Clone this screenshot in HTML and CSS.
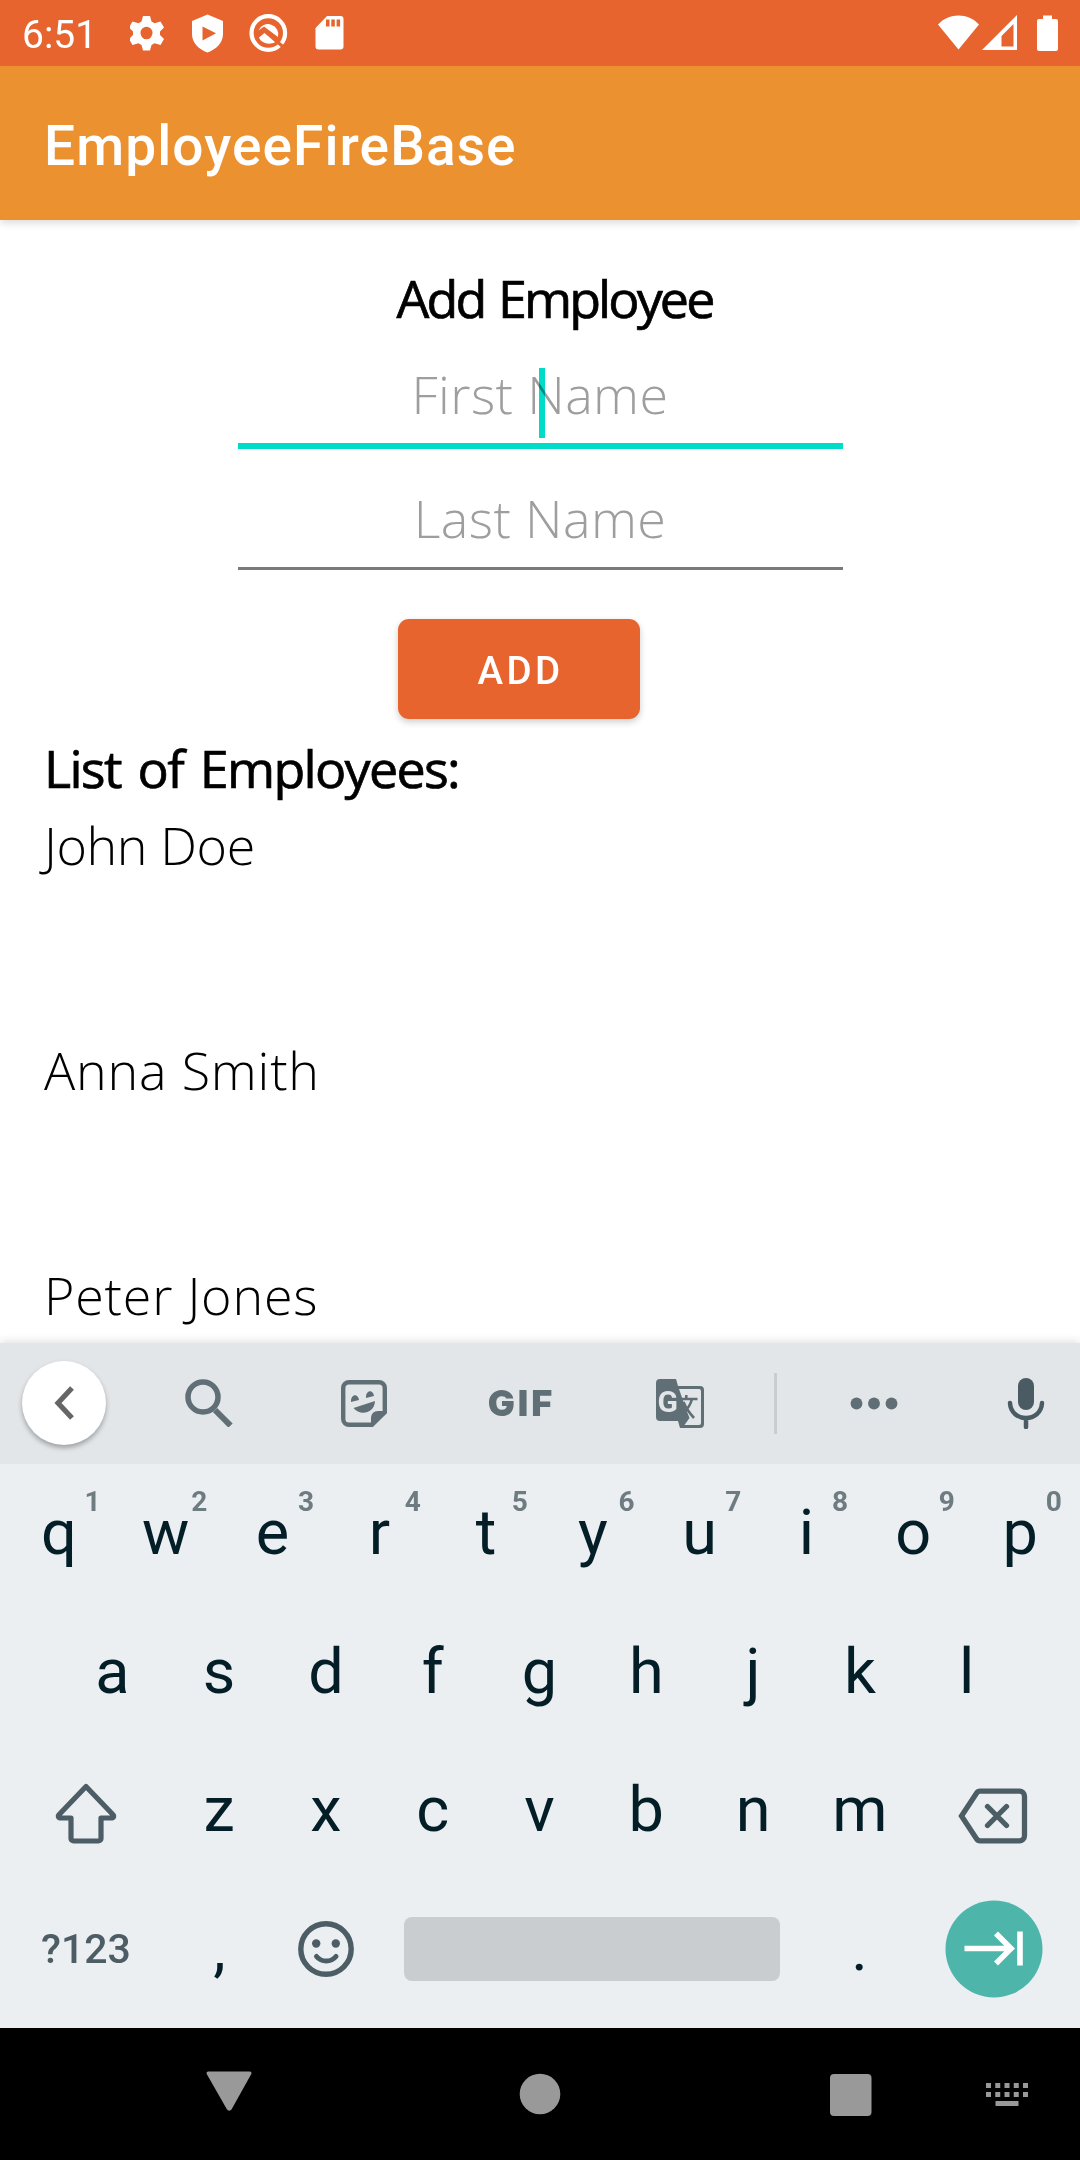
FILE: index.html
```html
<!DOCTYPE html>
<html lang="en">
<head>
<meta charset="utf-8">
<title>EmployeeFireBase</title>
<link rel="stylesheet" href="styles.css">
</head>
<body>
<div class="screen">
  <div class="status-bar">
    <span class="clock">6:51</span>
    <svg class="notifications" width="216" height="40" viewBox="0 0 216 40" fill="#fff">
      <g fill-rule="evenodd"><path d="M13 3h7l1.500 5.500 3 1.700 6-1.700 3.500 6-4 4v3.500l4 4-3.500 6-6-1.700-3 1.700-1.500 5.500h-7l-1.500-5.500-3-1.700-6 1.700-3.500-6 4-4v-3.500l-4-4 3.500-6 6 1.700 3-1.700zM16.500 13.700a6 6.300 0 1 0 0 12.600 6 6.300 0 1 0 0-12.600z"/>
      <path d="M77.500 1.500 93 8v13c0 9-7 15.500-15.500 18.500C69 36.500 62 30 62 21V8zM72.500 13.500v14L86 20.200z"/></g>
      <circle cx="138.300" cy="20" r="16.800" fill="none" stroke="#fff" stroke-width="4.200"/>
      <path d="M128.500 17.500a10.300 10.300 0 0 1 19.500 6.500L134 13.500zM129 24.500l6-5 10.500 9.500c-6 3.500-14 1.500-16.500-4.500z"/>
      <path d="M127.500 22l6-5 21 18" stroke="#e7642f" stroke-width="3.200" fill="none"/>
      <path d="M197 3h13.500a3 3 0 0 1 3 3v27.500a3 3 0 0 1-3 3h-22a3 3 0 0 1-3-3V15z"/>
      <path d="M196 6.500h3.500v7H196zM201.300 6.500h3.500v7h-3.500zM206.600 6.500h3.500v7h-3.500z" fill="#e7642f"/>
    </svg>
    <svg class="signals" width="122" height="40" viewBox="0 0 122 40" fill="#fff">
      <path d="M0 11.500C11-.5 30-.5 41 11.500L20.500 36.500z"/>
      <path d="M79 2v35H44zM75.500 11 63.500 23v10.500h12z" fill-rule="evenodd"/>
      <path d="M105 2.500h9V6h4a2 2 0 0 1 2 2v28a2 2 0 0 1-2 2h-17a2 2 0 0 1-2-2V8a2 2 0 0 1 2-2h4z"/>
    </svg>
  </div>
  <header class="app-bar">EmployeeFireBase</header>

  <main class="content">
    <h1 class="form-title">Add Employee</h1>
    <div class="field field-active"><span class="hint">First Name</span><i class="caret"></i></div>
    <div class="field"><span class="hint">Last Name</span></div>
    <button class="add-button">ADD</button>
    <h2 class="list-title">List of Employees:</h2>
    <ul class="employees">
      <li class="john">John Doe</li>
      <li>Anna Smith</li>
      <li>Peter Jones</li>
    </ul>
  </main>

  <section class="keyboard">
    <div class="toolbar">
      <span class="collapse"><svg width="84" height="84" viewBox="0 0 84 84" fill="none" stroke="#666" stroke-width="5.200"><path d="M50 27 36 42l14 15"/></svg></span>
      <svg width="48" height="48" viewBox="0 0 48 48" fill="none" stroke="#606f76"><circle cx="18" cy="18" r="15" stroke-width="5.500"/><path d="M30 31l15.500 15.500" stroke-width="6"/></svg>
      <svg width="46" height="47" viewBox="0 0 46 47"><path d="M8 2.200h30a5.800 5.800 0 0 1 5.800 5.800v24L31 44.800H8A5.800 5.800 0 0 1 2.200 39V8A5.800 5.800 0 0 1 8 2.200z" fill="none" stroke="#606f76" stroke-width="4.400"/><path d="M46 31h-8.500c-5 0-7.500 3-7.500 7.500V46h2L46 33zM10 22c-.5-8 7-9 8-2zM25 18c-.5-8 7-9 8-2zM12.500 28l21.500-7c-.5 13-15.500 15-21.500 7z" fill="#606f76"/></svg>
      <span class="gif">GIF</span>
      <svg width="48" height="49" viewBox="0 0 48 49"><path d="M4 0h16l2 7h22a4 4 0 0 1 4 4v34a4 4 0 0 1-4 4H24l-2-7H4a4 4 0 0 1-4-4V4a4 4 0 0 1 4-4z" fill="#606f76"/><path d="M23 10h20a2 2 0 0 1 2 2v32a2 2 0 0 1-2 2H28.500l5-7-3.500-9z" fill="#e2e6e9"/><text x="1.500" y="33" class="glyph-g">G</text><g fill="none" stroke="#606f76" stroke-width="2.600"><path d="M25 20h16.500M30.300 16v4M36 20c-1.500 6-4 10-9.500 15M27.500 23c2 5 5 10 10.500 16"/></g></svg>
      <i class="divider"></i>
      <svg width="48" height="14" viewBox="0 0 48 14" fill="#606f76"><circle cx="6.500" cy="7.500" r="5.900"/><circle cx="24" cy="7.500" r="5.900"/><circle cx="41.500" cy="7.500" r="5.900"/></svg>
      <svg class="mic" width="38" height="52" viewBox="0 0 38 52"><rect x="11" y="1" width="16" height="32" rx="8" fill="#4a5b63"/><path d="M3 26c1 20 31 20 32 0M19 41v9" fill="none" stroke="#4a5b63" stroke-width="4.500" stroke-linecap="round"/></svg>
    </div>
    <div class="keys">
      <div class="row">
        <span class="key">q<sup>1</sup></span><span class="key">w<sup>2</sup></span><span class="key">e<sup>3</sup></span><span class="key">r<sup>4</sup></span><span class="key">t<sup>5</sup></span><span class="key">y<sup>6</sup></span><span class="key">u<sup>7</sup></span><span class="key">i<sup>8</sup></span><span class="key">o<sup>9</sup></span><span class="key">p<sup>0</sup></span>
      </div>
      <div class="row">
        <span class="key">a</span><span class="key">s</span><span class="key">d</span><span class="key">f</span><span class="key">g</span><span class="key">h</span><span class="key">j</span><span class="key">k</span><span class="key">l</span>
      </div>
      <div class="row">
        <span class="key wide shift"><svg width="62" height="62" viewBox="0 0 62 62" fill="none" stroke="#4c5d65" stroke-width="5.200" stroke-linejoin="round"><path d="M31 4.500 58.300 33a1.800 1.800 0 0 1-1 3H46v20.500a2.500 2.500 0 0 1-2.500 2.500h-25a2.500 2.500 0 0 1-2.500-2.500V36H4.700a1.800 1.800 0 0 1-1-3z"/></svg></span><span class="key">z</span><span class="key">x</span><span class="key">c</span><span class="key">v</span><span class="key">b</span><span class="key">n</span><span class="key">m</span><span class="key wide back"><svg width="70" height="56" viewBox="0 0 70 56" fill="none" stroke="#4c5d65" stroke-width="5.300"><path d="M22 3.200h39.500a5 5 0 0 1 5 5v39.600a5 5 0 0 1-5 5H22c-1.500 0-2.500-.5-3.500-2L3.500 28 18.500 5.200c1-1.500 2-2 3.500-2z"/><path d="M29.500 18.500l19 19M48.500 18.500l-19 19" stroke-linecap="round"/></svg></span>
      </div>
      <div class="row">
        <span class="key wide symbols">?123</span><span class="key">,</span><span class="key"><svg width="58" height="58" viewBox="0 0 58 58" fill="none" stroke="#4c5d65"><circle cx="29" cy="29" r="25.200" stroke-width="5.400"/><path d="M19.500 36.500c5 6 14.500 6 19.500 0" stroke-width="5" stroke-linecap="round"/><g fill="#4c5d65" stroke="none"><circle cx="19.200" cy="23.500" r="4.200"/><circle cx="38.800" cy="23.500" r="4.200"/></g></svg></span><span class="space"></span><span class="key">.</span><span class="key wide enter"><svg width="98" height="98" viewBox="0 0 98 98"><circle cx="49" cy="49" r="48.500" fill="#4eb5ab"/><path d="M19.500 48.500h47M51 33.500l15 15-15 15M75 31.500v34" fill="none" stroke="#fff" stroke-width="5.600"/></svg></span>
      </div>
    </div>
  </section>

  <nav class="nav-bar">
    <svg class="nav-back" width="46" height="40" viewBox="0 0 46 40" fill="#999"><path d="M2.500.5h41c2 0 2.500 1.500 1.500 3L25.500 38.500c-1 1.500-3.500 1.500-4.500 0L1 3.500C0 2 .5.500 2.500.5z"/></svg>
    <svg class="nav-home" width="42" height="42" viewBox="0 0 42 42" fill="#999"><circle cx="21" cy="21" r="20.300"/></svg>
    <svg class="nav-recent" width="42" height="42" viewBox="0 0 42 42" fill="#999"><rect width="41.500" height="42" rx="4"/></svg>
    <svg class="nav-ime" width="42" height="24" viewBox="0 0 42 24" fill="none" stroke="#999" stroke-width="5"><path d="M0 2.500h42M0 11.500h42" stroke-dasharray="5 4.250"/><path d="M9.500 20.500h23"/></svg>
  </nav>
</div>
</body>
</html>
```

FILE: styles.css
```css
* { box-sizing: border-box; margin: 0; padding: 0; }

body { font-family: Roboto, "Liberation Sans", sans-serif; background: #fff; }

svg { display: block; flex: none; }

.screen {
  width: 1080px;
  height: 2160px;
  display: flex;
  flex-direction: column;
  overflow: hidden;
}

/* Status and app bars */
.status-bar {
  flex: none;
  height: 66px;
  display: flex;
  align-items: flex-start;
  padding: 13px 20px 0 22px;
  background: #e7642f;
  color: #fff;
}
.clock { width: 108px; font-size: 39px; line-height: 44px; }
.signals { margin-left: auto; }

.app-bar {
  flex: none;
  height: 154px;
  padding: 6px 44px 0;
  line-height: 148px;
  font-size: 55px;
  font-weight: 500;
  letter-spacing: 1.1px;
  color: #fff;
  background: #ec912f;
  box-shadow: 0 3px 8px rgba(0, 0, 0, 0.15);
  clip-path: inset(0 0 -20px 0);
}

/* Form and list */
.content {
  flex: none;
  height: 1123px;
  padding: 42px 44px 0;
  display: flex;
  flex-direction: column;
  align-items: center;
  overflow: hidden;
  font-family: "Coming Soon", "Open Sans", "Noto Sans", sans-serif;
  font-size: 52px;
  font-weight: 300;
  line-height: 72px;
  color: #000;
  white-space: nowrap;
}
.content > * { flex: none; }
.form-title, .list-title {
  height: 70px;
  font-size: 52px;
  font-weight: 500;
  -webkit-text-stroke: 0.7px #000;
}
.form-title { padding-left: 29px; letter-spacing: -2.9px; word-spacing: 3px; }

.field {
  position: relative;
  width: 605px;
  height: 88px;
  margin-top: 33px;
  border-bottom: 3px solid #7a7a7a;
  text-align: center;
  letter-spacing: 0.4px;
  color: #9e9e9e;
}
.field-active { height: 91px; margin-top: 26px; border-bottom: 6px solid #00dcc8; }
.caret {
  position: absolute;
  left: 301px;
  top: 10px;
  width: 6px;
  height: 70px;
  background: #00dcc8;
  mix-blend-mode: multiply;
}

.add-button {
  width: 242px;
  height: 100px;
  margin: 49px 42px 0 0;
  border: 0;
  border-radius: 11px;
  background: #e7642f;
  box-shadow: 0 3px 7px rgba(0, 0, 0, 0.2);
  color: #fff;
  font: 500 38.500px/97px Roboto, sans-serif;
  letter-spacing: 3.400px;
  padding: 3px 0 0 3px;
}

.list-title { align-self: flex-start; margin-top: 13px; letter-spacing: -1.7px; word-spacing: 5px; }
.employees { align-self: flex-start; margin-top: 7px; list-style: none; }
.employees li { height: 225px; letter-spacing: 0.8px; }
.employees .john { letter-spacing: -0.4px; }

/* Keyboard */
.keyboard {
  flex: none;
  height: 685px;
  background: #ebeff2;
  box-shadow: 0 -1px 9px rgba(0, 0, 0, 0.14);
}
.toolbar {
  height: 121px;
  padding-bottom: 1px;
  display: grid;
  grid-template-columns: 127px 164px 146px 166px 154px 37px 159px 127px;
  place-items: center;
  background: #e2e6e9;
}
.collapse {
  width: 84px;
  height: 84px;
  border-radius: 50%;
  background: #fff;
  box-shadow: 0 3px 5px rgba(0, 0, 0, 0.3);
}
.gif {
  font: 900 36px/40px Inter, sans-serif;
  letter-spacing: 3px;
  padding-left: 3px;
  color: #606f76;
}
.glyph-g { font: 700 30px Roboto, sans-serif; fill: #e2e6e9; }
.divider { width: 3px; height: 61px; background: #c9cdd0; }
.mic { margin-left: 19px; }

.keys { padding: 0 5px 0 4px; }
.row { height: 138.500px; display: flex; justify-content: center; align-items: center; }
.key {
  position: relative;
  flex: none;
  width: 106.800px;
  height: 138px;
  display: flex;
  justify-content: center;
  align-items: center;
  font-size: 63px;
  line-height: 138px;
  color: #041e28;
}
.key sup {
  position: absolute;
  left: 67px;
  top: 22px;
  width: 40px;
  text-align: center;
  font-size: 28px;
  line-height: 32px;
  font-weight: 700;
  color: #6e7c82;
}
.wide { width: 160.200px; }
.shift { padding-top: 5px; }
.back { padding-top: 12px; }
.enter { padding-left: 2px; }
.symbols { font-size: 41px; font-weight: 500; color: #4c5d65; }
.space { flex: none; width: 376px; height: 64px; margin: 0 26px 0 24.400px; border-radius: 8px; background: #c9cdd0; }

/* System navigation */
.nav-bar {
  flex: none;
  height: 132px;
  display: flex;
  align-items: center;
  padding-left: 206px;
  background: #000;
}
.nav-back { margin-top: -7px; }
.nav-home { margin-left: 267px; }
.nav-recent { margin: 1px 0 0 269px; }
.nav-ime { margin: 1px 0 0 114px; }
```
